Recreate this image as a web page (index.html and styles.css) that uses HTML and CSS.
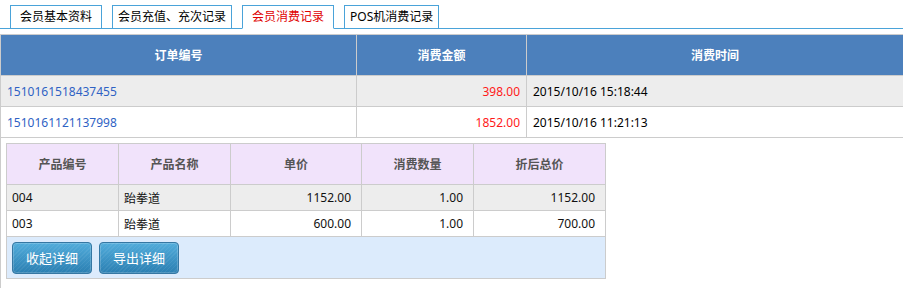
FILE: index.html
```html
<!DOCTYPE HTML>
<html lang="zh-CN">
  <head>
    <title>会员消费记录</title>
    <meta charset="utf-8">
    <link rel="stylesheet" href="styles.css">
  </head>
  <body>

  <ul class="tabs">
    <li class="tab">会员基本资料</li>
    <li class="tab">会员充值、充次记录</li>
    <li class="tab active">会员消费记录</li>
    <li class="tab">POS机消费记录</li>
  </ul>

  <table class="orders">
    <colgroup>
      <col class="c-no">
      <col class="c-amount">
      <col>
    </colgroup>
    <tr>
      <th>订单编号</th>
      <th>消费金额</th>
      <th>消费时间</th>
    </tr>
    <tr class="odd">
      <td><a href="#">1510161518437455</a></td>
      <td class="num money">398.00</td>
      <td>2015/10/16 15:18:44</td>
    </tr>
    <tr>
      <td><a href="#">1510161121137998</a></td>
      <td class="num money">1852.00</td>
      <td>2015/10/16 11:21:13</td>
    </tr>
    <tr>
      <td colspan="3" class="detail-cell">

        <table class="detail">
          <colgroup>
            <col class="d1"><col class="d2"><col class="d3"><col class="d4"><col class="d5">
          </colgroup>
          <tr>
            <th>产品编号</th>
            <th>产品名称</th>
            <th>单价</th>
            <th>消费数量</th>
            <th>折后总价</th>
          </tr>
          <tr class="odd">
            <td>004</td>
            <td>跆拳道</td>
            <td class="num">1152.00</td>
            <td class="num">1.00</td>
            <td class="num">1152.00</td>
          </tr>
          <tr>
            <td>003</td>
            <td>跆拳道</td>
            <td class="num">600.00</td>
            <td class="num">1.00</td>
            <td class="num">700.00</td>
          </tr>
          <tr>
            <td colspan="5" class="actions">
              <button class="btn">收起详细</button>
              <button class="btn">导出详细</button>
            </td>
          </tr>
        </table>

      </td>
    </tr>
  </table>

  </body>
</html>
```

FILE: styles.css
```css
body {
  margin: 0;
  padding: 0;
  background: #fff;
  color: #000;
  font-family: "Noto Sans", "Noto Sans CJK SC", sans-serif;
  font-size: 12px;
}

/* tabs */
.tabs {
  display: flex;
  gap: 10px;
  margin: 0;
  padding: 5px 0 0 10px;
  list-style: none;
  border-bottom: 1px solid #4aa3d9;
}
.tab {
  min-width: 80px;
  height: 22px;
  line-height: 22px;
  padding: 0 5px;
  margin-bottom: -1px;
  border: 1px solid #4aa3d9;
  background: #fff;
  text-align: center;
  white-space: nowrap;
}
.tab.active {
  color: #e00000;
  border-bottom-color: #fff;
}

/* orders table */
table {
  border-collapse: collapse;
  table-layout: fixed;
}
.orders {
  width: 100%;
  margin-top: 5px;
  border-left: 1px solid #ccc;
}
.orders col.c-no {
  width: 356px;
}
.orders col.c-amount {
  width: 170px;
}
.orders th,
.orders td {
  border: 1px solid #ccc;
  padding: 0 6px;
}
.orders th:last-child,
.orders td:last-child {
  border-right: 0;
}
.orders th {
  height: 40px;
  background: #4c80bc;
  color: #fff;
  font-weight: bold;
  text-align: center;
}
.orders td {
  height: 30px;
  text-align: left;
}
.orders tr.odd td {
  background: #ededed;
}
.num {
  text-align: right !important;
}
.money {
  color: #ff1a1a;
}
a {
  color: #2f62c4;
  text-decoration: none;
}
.orders td.detail-cell {
  height: auto;
  padding: 5px 5px 10px 5px;
  background: #fff;
}

/* detail table */
.detail {
  width: 600px;
  border: 1px solid #ccc;
}
.detail col.d1 { width: 112px; }
.detail col.d2 { width: 112px; }
.detail col.d3 { width: 131px; }
.detail col.d4 { width: 112px; }
.detail col.d5 { width: 132px; }
.detail th,
.detail td {
  border: 1px solid #ccc;
  padding: 0 5px;
}
.detail th {
  height: 40px;
  background: #f1e3fb;
  color: #555;
  font-weight: bold;
  text-align: center;
}
.detail td {
  height: 25px;
  color: #111;
}
.detail td.num {
  padding-right: 10px;
}
.detail tr.odd td {
  background: #ededed;
}
.detail td.actions {
  height: 41px;
  padding: 0 5px;
  background: #dcebfc;
}

.btn {
  width: 80px;
  height: 32px;
  margin-right: 4px;
  padding: 0;
  border: 1px solid #3577a3;
  border-radius: 4px;
  color: #fff;
  font-family: "Noto Sans", "Noto Sans CJK SC", sans-serif;
  font-size: 13px;
  background:
    repeating-linear-gradient(135deg, rgba(255,255,255,0.06) 0 1px, rgba(255,255,255,0) 1px 3px),
    linear-gradient(#52acdb, #2b7fb2);
  box-shadow: inset 0 0 0 1px rgba(255,255,255,0.18);
  cursor: pointer;
}
```
